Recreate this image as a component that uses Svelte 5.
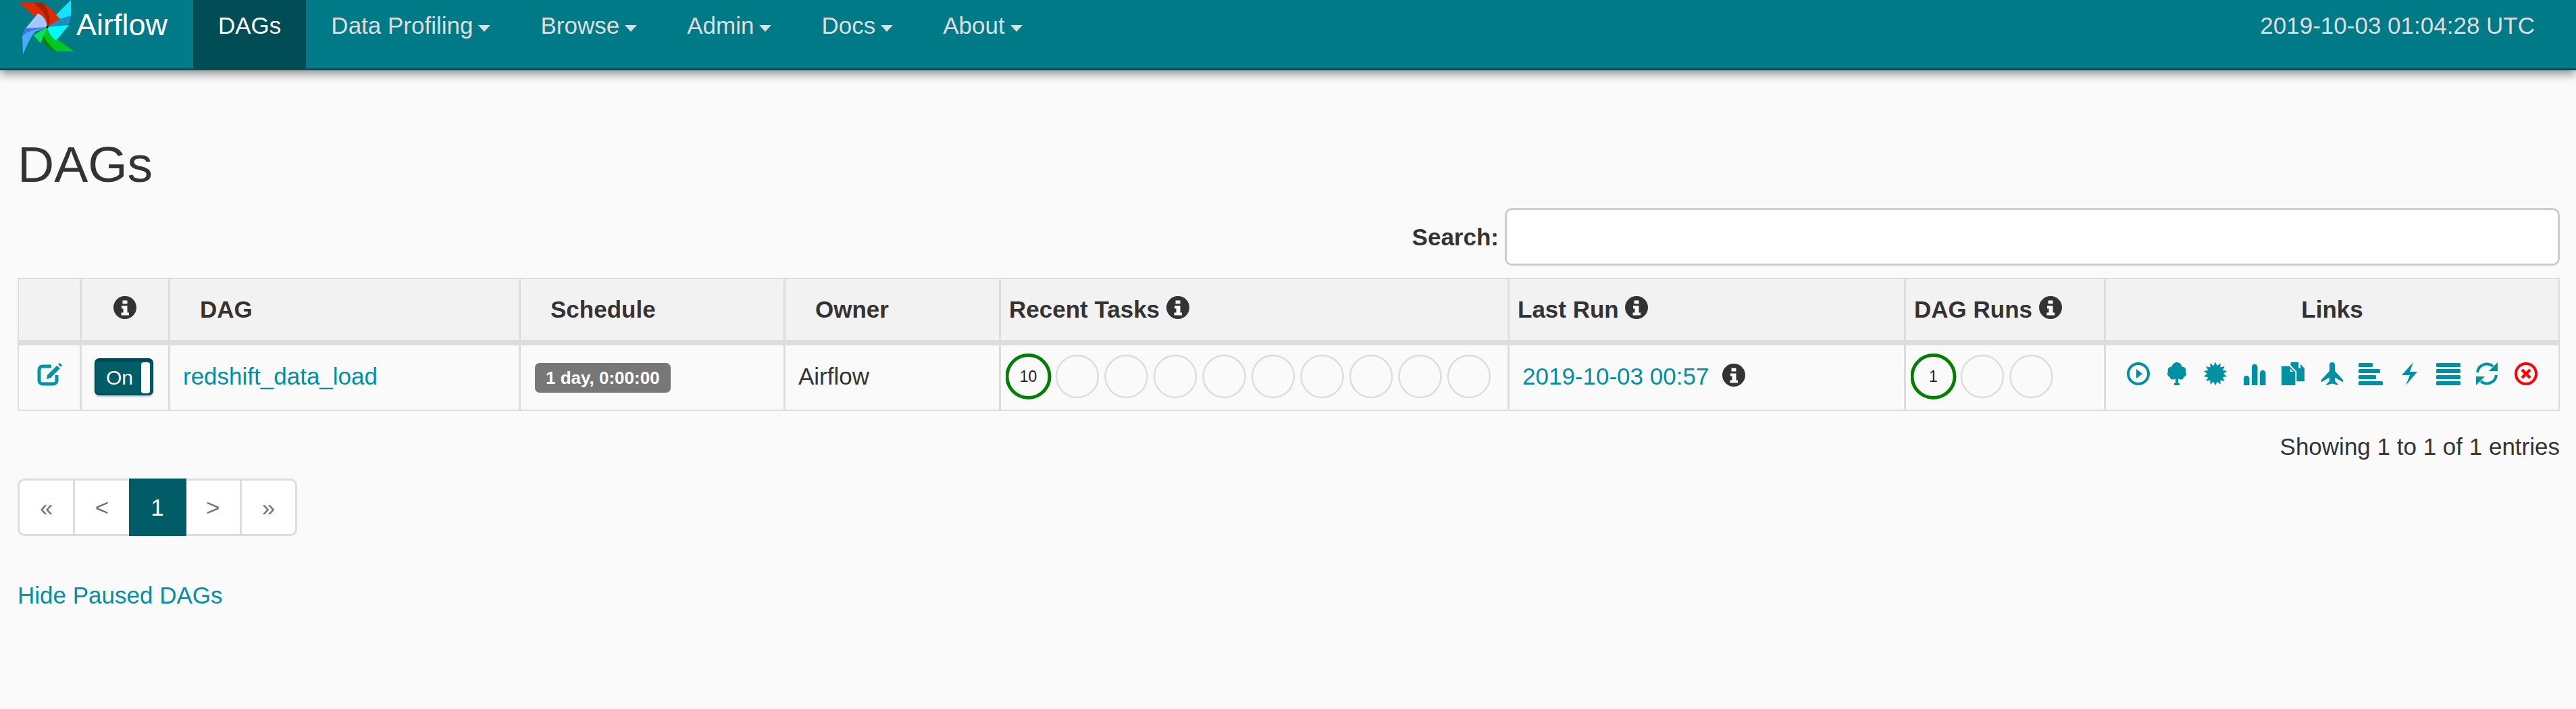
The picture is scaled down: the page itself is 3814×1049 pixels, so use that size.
<script lang="ts">
	const navItems = ['Data Profiling', 'Browse', 'Admin', 'Docs', 'About'];

	// spiky burst for the graph view link
	function burst(cx: number, cy: number, r1: number, r2: number, n: number) {
		const pts: string[] = [];
		for (let i = 0; i < n * 2; i++) {
			const r = i % 2 ? r2 : r1;
			const a = (Math.PI * i) / n - Math.PI / 2;
			pts.push(`${(cx + r * Math.cos(a)).toFixed(2)},${(cy + r * Math.sin(a)).toFixed(2)}`);
		}
		return pts.join(' ');
	}

	const taskCircles = Array.from({ length: 9 }, (_, i) => i);
	const runCircles = Array.from({ length: 2 }, (_, i) => i);
</script>

{#snippet info()}
	<svg class="info" viewBox="0 0 34 34" aria-hidden="true">
		<circle cx="17" cy="17" r="17" fill="#333" />
		<path d="M13.5 6.5h7v5h-7zM12 14.5h8.500v10h2.500v4H11.500v-4h3v-6H12z" fill="#fafafa" />
	</svg>
{/snippet}

<nav class="navbar">
	<a class="brand" href="#top">
		<svg class="logo" viewBox="0 0 270 110" aria-hidden="true">
			<path d="M28 4 L58 4 Q72 6 89 28 L70 40 Q68 28 57 21 L51 24 Z" fill="#e02a00" />
			<path d="M50 4 L62 4 Q72 10 74 34 L70 40 Q70 22 60 14 Z" fill="#a82000" />
			<path d="M105 0 L105 25 L89 28 L83 22 Z" fill="#14e2ff" />
			<path d="M105 23 Q104 34 100 38 Q86 42 70 40 L89 28 Z" fill="#1c8fc0" />
			<path d="M70 40 L102 37 L83 60 L70 50 Z" fill="#00faff" />
			<path d="M110 76 L84 76 Q74 74 60 58 L50 52 L70 40 Q72 50 82 60 L84 58 Z" fill="#00c81e" />
			<path d="M63 46 Q66 62 84 76 Q74 74 67 67 Q60 60 58 50 Z" fill="#00850f" />
			<path d="M50 52 L70 40 L60 64 Z" fill="#0ce060" />
			<path d="M34 81 L33 54 Q35 44 38 42 L70 40 L52 47 Q44 56 34 81 Z" fill="#4aaaff" />
			<path d="M33 54 Q35 44 38 42 L70 40 L52 44 Q40 46 33 54 Z" fill="#4272e6" />
			<path d="M38 42 L56 20 Q68 24 70 40 Z" fill="#a8c6ff" />
			<circle cx="70" cy="40" r="1.700" fill="#000" />
		</svg>
		<span>Airflow</span>
	</a>
	<a class="nav-link active" href="#top">DAGs</a>
	{#each navItems as item}
		<a class="nav-link" href="#top">{item}<span class="caret"></span></a>
	{/each}
	<span class="clock">2019-10-03 01:04:28 UTC</span>
</nav>

<main class="container">
	<h1>DAGs</h1>

	<div class="search-row">
		<label for="search">Search:</label>
		<input id="search" type="search" />
	</div>

	<table>
		<colgroup>
			<col class="c-edit" /><col class="c-toggle" /><col class="c-dag" /><col class="c-sched" />
			<col class="c-owner" /><col class="c-tasks" /><col class="c-last" /><col class="c-runs" /><col />
		</colgroup>
		<thead>
			<tr>
				<th></th>
				<th class="center">{@render info()}</th>
				<th class="sortable">DAG</th>
				<th class="sortable">Schedule</th>
				<th class="sortable">Owner</th>
				<th>Recent Tasks {@render info()}</th>
				<th>Last Run {@render info()}</th>
				<th>DAG Runs {@render info()}</th>
				<th class="center last">Links</th>
			</tr>
		</thead>
		<tbody>
			<tr>
				<td class="center edit-cell">
					<svg class="edit" viewBox="0 0 37 34" aria-hidden="true">
						<path d="M21 5H8a5 5 0 0 0-5 5v16a5 5 0 0 0 5 5h16a5 5 0 0 0 5-5V18" fill="none" stroke="#0095a6" stroke-width="5" />
						<path d="M14 24l1-6L29 4l5 4-14 14zM31 2l2-2 4 3-2 3z" fill="#0095a6" />
					</svg>
				</td>
				<td class="toggle-cell">
					<div class="toggle"><span>On</span><i></i></div>
				</td>
				<td class="text"><a href="#top">redshift_data_load</a></td>
				<td class="text badge-cell"><span class="badge">1 day, 0:00:00</span></td>
				<td class="text">Airflow</td>
				<td class="circles">
					<svg class="status tasks" viewBox="0 0 727 68" aria-hidden="true">
						<circle cx="33.500" cy="34" r="31.500" class="done" />
						<text x="33.500" y="42" text-anchor="middle">10</text>
						{#each taskCircles as i}
							<circle cx={106 + i * 72.5} cy="34" r="31" class="empty" />
						{/each}
					</svg>
				</td>
				<td class="text last-run"><a href="#top">2019-10-03 00:57</a>{@render info()}</td>
				<td class="circles">
					<svg class="status runs" viewBox="0 0 220 68" aria-hidden="true">
						<circle cx="33.500" cy="34" r="31.500" class="done" />
						<text x="33.500" y="42" text-anchor="middle">1</text>
						{#each runCircles as i}
							<circle cx={106 + i * 72.5} cy="34" r="31" class="empty" />
						{/each}
					</svg>
				</td>
				<td class="last links-cell">
					<div class="links">
						<svg viewBox="0 0 34 34"><circle cx="17" cy="17" r="15" fill="none" stroke="currentColor" stroke-width="4" /><path d="M14 10l9 7-9 7z" /></svg>
						<svg viewBox="0 0 34 34"><circle cx="17" cy="7.500" r="7.500" /><circle cx="9" cy="12" r="5.500" /><circle cx="25" cy="12" r="5.500" /><circle cx="8" cy="17" r="5" /><circle cx="26" cy="17" r="5" /><circle cx="11" cy="21" r="4.500" /><circle cx="23" cy="21" r="4.500" /><circle cx="17" cy="16" r="9" /><path d="M15 22h4v9h2v3h-8v-3h2z" /></svg>
						<svg viewBox="0 0 34 34"><polygon points={burst(17, 17, 17.5, 12, 14)} /></svg>
						<svg viewBox="0 0 34 34"><path d="M1 35V24a4.200 4.200 0 0 1 8.500 0v11zM13 35V7a4.200 4.200 0 0 1 8.500 0v28zM25 35V16a4.200 4.200 0 0 1 8.500 0v19z" /></svg>
						<svg viewBox="0 0 35 35"><path d="M14 0h12v9h9v20H23V14l-9-9z" /><path d="M29 3l6 6h-6z" /><path d="M0 6h12l9 9v20H0z" /><path d="M13 9.500v5h5z" fill="#fafafa" /></svg>
						<svg viewBox="0 0 34 34"><path d="M13 4a4 4 0 0 1 8 0v9l12 13v3.500l-12-7v5l5 5.500v1l-9-2.500-9 2.500v-1l5-5.500v-5l-12 7V26l12-13z" /></svg>
						<svg viewBox="0 0 36 34"><rect y="1" width="21" height="6" rx="1.500" /><rect y="10" width="32" height="6" rx="1.500" /><rect y="19" width="26" height="6" rx="1.500" /><rect y="28" width="36" height="6" rx="1.500" /></svg>
						<svg viewBox="0 0 23 34"><path d="M17 0L0 19h12L6 34l17-20H12z" /></svg>
						<svg viewBox="0 0 36 34"><rect y="1" width="36" height="6" rx="1.500" /><rect y="10" width="36" height="6" rx="1.500" /><rect y="19" width="36" height="6" rx="1.500" /><rect y="28" width="36" height="6" rx="1.500" /></svg>
						<svg viewBox="0 0 34 34"><path d="M3 15a14 14 0 0 1 23-9M31 19a14 14 0 0 1-23 9" fill="none" stroke="currentColor" stroke-width="4" /><path d="M33 0v13H20zM1 34V21h13z" /></svg>
						<svg viewBox="0 0 34 34"><circle cx="17" cy="17" r="15" fill="none" stroke="#f00" stroke-width="4" /><path d="M11 11l12 12M23 11L11 23" stroke="#f00" stroke-width="4.500" /></svg>
					</div>
				</td>
			</tr>
		</tbody>
	</table>

	<div class="entries">Showing 1 to 1 of 1 entries</div>

	<ul class="pagination">
		<li>«</li>
		<li>&lt;</li>
		<li class="current">1</li>
		<li>&gt;</li>
		<li>»</li>
	</ul>

	<a class="paused" href="#top">Hide Paused DAGs</a>
</main>

<style>
	:global(body) {
		margin: 0;
		background: #fafafa;
		font-family: "Liberation Sans", Arial, sans-serif;
		font-size: 35px;
		color: #333;
	}

	a {
		color: #0090a3;
		text-decoration: none;
	}

	.navbar {
		display: flex;
		height: 101px;
		background: #007a87;
		border-bottom: 3px solid #004f58;
		box-shadow: 0 5px 14px rgba(0, 0, 0, 0.45);
	}
	.brand {
		display: flex;
		width: 286px;
		color: #fff;
		font-size: 45px;
		line-height: 44px;
	}
	.brand span {
		padding: 15px 0 0 113px;
	}
	.logo {
		width: 270px;
		height: 110px;
		margin-right: -270px;
		flex: none;
		overflow: visible;
	}
	.nav-link {
		padding: 14px 37px 0;
		line-height: 48px;
		color: #ddd;
		white-space: nowrap;
	}
	.nav-link.active {
		background: #004d56;
		color: #fff;
	}
	.caret {
		display: inline-block;
		margin-left: 8px;
		vertical-align: 3px;
		border-top: 10px solid #ddd;
		border-left: 9px solid transparent;
		border-right: 9px solid transparent;
	}
	.clock {
		margin-left: auto;
		padding: 14px 61px 0 0;
		line-height: 48px;
		color: #ddd;
	}

	.container {
		padding: 0 24px 0 26px;
	}
	h1 {
		margin: 0;
		padding-top: 96px;
		font-size: 75px;
		line-height: 86px;
		font-weight: 400;
	}
	.search-row {
		display: flex;
		justify-content: flex-end;
		align-items: center;
		gap: 9px;
		margin-top: 22px;
	}
	label {
		font-weight: 700;
	}
	input {
		box-sizing: border-box;
		width: 1562px;
		height: 85px;
		background: #fff;
		border: 3px solid #ccc;
		border-radius: 10px;
		outline: none;
	}

	table {
		box-sizing: border-box;
		width: 3764px;
		margin-top: 18px;
		table-layout: fixed;
		border-collapse: separate;
		border-spacing: 0;
		border: 2px solid #ddd;
	}
	.c-edit { width: 93px; }
	.c-toggle { width: 131px; }
	.c-dag { width: 519px; }
	.c-sched { width: 392px; }
	.c-owner { width: 319px; }
	.c-tasks { width: 753px; }
	.c-last { width: 587px; }
	.c-runs { width: 296px; }

	th {
		height: 98px;
		padding: 0 0 0 12px;
		box-sizing: border-box;
		background: #f2f2f2;
		border-right: 3px solid #ddd;
		border-bottom: 8px solid #ddd;
		text-align: left;
		white-space: nowrap;
	}
	th.sortable {
		padding-left: 44px;
	}
	th.center,
	td.center {
		padding: 0;
		text-align: center;
	}
	td {
		height: 95px;
		padding: 0;
		box-sizing: border-box;
		border-right: 3px solid #ddd;
	}
	.last {
		border-right: 0;
	}
	td.text {
		padding: 0 0 3px 19px;
	}
	td.badge-cell {
		padding: 0 0 0 21px;
	}
	td.circles {
		padding: 0 0 4px 7px;
	}
	td.edit-cell {
		padding-bottom: 10px;
	}
	td.toggle-cell {
		padding-bottom: 2px;
	}
	td.links-cell {
		padding-bottom: 12px;
	}
	.info {
		width: 34px;
		height: 34px;
		vertical-align: -2px;
	}

	.edit {
		display: block;
		width: 37px;
		height: 34px;
		margin: 0 auto;
	}
	.toggle {
		box-sizing: border-box;
		display: flex;
		align-items: center;
		width: 87px;
		height: 55px;
		margin-left: 19px;
		padding: 0 3px 0 15px;
		background: #005c66;
		border: 2px solid #004852;
		border-top-width: 5px;
		border-radius: 7px;
		color: #fff;
		font-size: 30px;
		box-shadow: 0 2px 3px rgba(0, 0, 0, 0.2);
	}
	.toggle i {
		margin-left: auto;
		width: 13px;
		height: 46px;
		background: #fff;
		border-radius: 4px;
	}
	.badge {
		display: inline-block;
		padding: 7px 16px;
		background: #777;
		border-radius: 7px;
		color: #fff;
		font-size: 26px;
		font-weight: 700;
		line-height: 30px;
		white-space: nowrap;
	}
	.last-run .info {
		margin-left: 20px;
		vertical-align: -3px;
	}

	.status {
		display: block;
		height: 68px;
	}
	.tasks { width: 727px; }
	.runs { width: 220px; }
	.done {
		fill: none;
		stroke: #008000;
		stroke-width: 5;
	}
	.empty {
		fill: none;
		stroke: #ddd;
		stroke-width: 2.5;
	}
	.status text {
		font-size: 23px;
		fill: #222;
	}

	.links {
		display: grid;
		grid-template-columns: repeat(11, 57.4px);
		justify-items: center;
		align-items: center;
		padding-left: 19px;
		color: #0090a3;
		fill: #0090a3;
	}
	.links svg {
		display: block;
		height: 34px;
		width: auto;
		max-width: 36px;
	}

	.entries {
		margin-top: 33px;
		line-height: 40px;
		text-align: right;
	}

	.pagination {
		display: flex;
		width: 414px;
		box-sizing: border-box;
		margin: 27px 0 0;
		padding: 0;
		list-style: none;
		background: #fff;
		border: 3px solid #ddd;
		border-radius: 10px;
		color: #777;
		line-height: 79px;
		text-align: center;
	}
	.pagination li {
		flex: 1;
		border-left: 3px solid #ddd;
	}
	.pagination li:first-child {
		border-left: 0;
	}
	.pagination .current {
		margin: -3px 0;
		padding: 3px 0;
		border-left: 0;
		background: #005c66;
		color: #fff;
		flex: 0 0 85px;
	}
	.pagination .current + li {
		border-left: 0;
	}

	.paused {
		display: block;
		margin-top: 68px;
		line-height: 40px;
	}
</style>
